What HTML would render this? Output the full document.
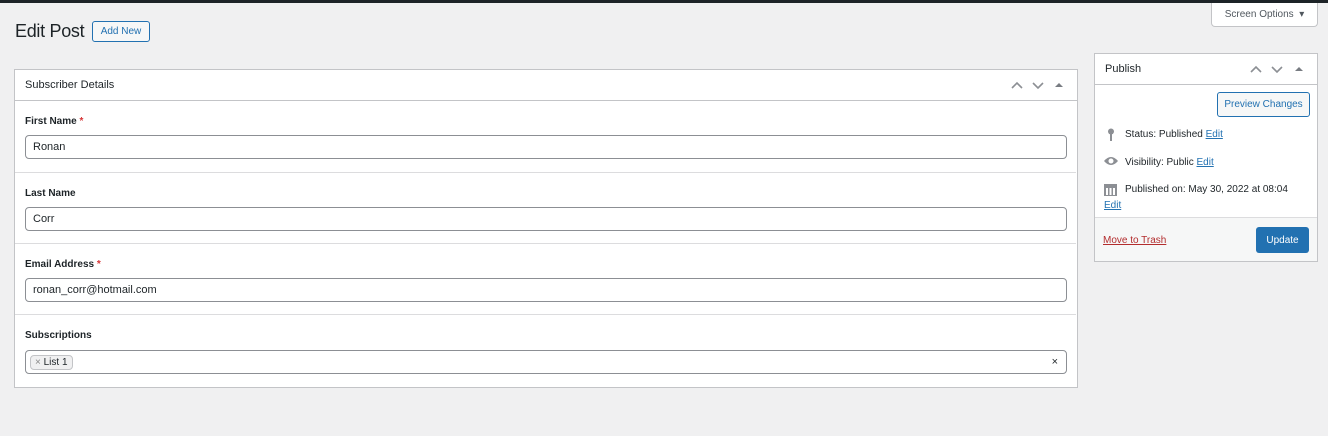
<!DOCTYPE html>
<html><head><style>
*{box-sizing:border-box;margin:0;padding:0}
body{width:1328px;height:436px;background:#f0f0f1;font-family:"Liberation Sans",sans-serif;color:#1d2327;position:relative;overflow:hidden;font-size:11px}
.abs{position:absolute}
.top{left:0;top:0;width:1328px;height:3px;background:#1d2327}
h1{position:absolute;left:15px;top:21px;font-size:18px;font-weight:400;letter-spacing:-0.3px}
.btn{display:flex;align-items:center;justify-content:center}
.addnew{left:92px;top:21px;width:58px;height:21px;border:1px solid #2271b1;border-radius:3px;color:#2271b1;font-size:10px;background:#f6f7f7}
.so{left:1211px;top:3px;width:107px;height:24px;border:1px solid #c3c4c7;border-top:none;border-radius:0 0 4px 4px;background:#fff;color:#50575e;font-size:10px}
.box{background:#fff;border:1px solid #c3c4c7}
.hdr{height:31px;border-bottom:1px solid #c3c4c7;font-size:11px;line-height:31px;padding-left:10px}
.sec{position:absolute;left:0;width:1061px;border-bottom:1px solid #dcdcde}
.lbl{position:absolute;left:10px;font-weight:bold;font-size:10px}
.inp{position:absolute;left:10px;width:1042px;height:24px;border:1px solid #8c8f94;border-radius:4px;padding-left:7px;line-height:23px;font-size:11px}
a{color:#2271b1;text-decoration:underline}
.row{position:absolute;left:10px;font-size:10px}
</style></head><body>
<div class="abs top"></div>
<h1>Edit Post</h1>
<div class="abs addnew btn">Add New</div>
<div class="abs so btn">Screen Options &nbsp;▾</div>

<div class="abs box" style="left:14px;top:69px;width:1064px;height:319px">
 <div class="hdr">Subscriber Details</div>
 <svg class="abs" style="left:996px;top:10px" width="60" height="12"><path d="M1 8l5-5 5 5M22 3l5 5 5-5" stroke="#8c8f94" stroke-width="1.6" fill="none"/><path d="M44 7l4-4 4 4z" fill="#787c82"/></svg>
 <div class="sec" style="top:31px;height:72px"><div class="lbl" style="top:15px">First Name <span style="color:#d63638">*</span></div><div class="inp" style="top:34px">Ronan</div></div>
 <div class="sec" style="top:103px;height:71px"><div class="lbl" style="top:15px">Last Name</div><div class="inp" style="top:34px">Corr</div></div>
 <div class="sec" style="top:174px;height:71px"><div class="lbl" style="top:15px">Email Address <span style="color:#d63638">*</span></div><div class="inp" style="top:34px">ronan_corr@hotmail.com</div></div>
 <div class="sec" style="top:245px;height:73px;border:none"><div class="lbl" style="top:15px">Subscriptions</div>
  <div class="inp" style="top:35px;padding-left:4px"><span style="display:inline-block;margin-top:4px;height:15px;line-height:13px;border:1px solid #c3c4c7;border-radius:4px;background:#f0f0f1;font-size:10px;padding:0 4px;vertical-align:top"><span style="color:#888">×</span> List 1</span><span style="position:absolute;right:8px;top:0;font-size:11px">×</span></div></div>
</div>

<div class="abs box" style="left:1094px;top:53px;width:224px;height:209px">
 <div class="hdr">Publish</div>
 <svg class="abs" style="left:155px;top:10px" width="60" height="12"><path d="M1 8l5-5 5 5M22 3l5 5 5-5" stroke="#8c8f94" stroke-width="1.6" fill="none"/><path d="M45 7l4-4 4 4z" fill="#787c82"/></svg>
 <div class="abs btn" style="left:122px;top:38px;width:93px;height:25px;border:1px solid #2271b1;border-radius:3px;color:#2271b1;font-size:10px;background:#f6f7f7">Preview Changes</div>
 <svg class="abs" style="left:12px;top:74px" width="8" height="14"><circle cx="4" cy="3.5" r="3" fill="#8c8f94"/><rect x="3" y="5" width="2" height="8" fill="#8c8f94"/></svg>
 <div class="row" style="left:30px;top:75px">Status: Published <a>Edit</a></div>
 <svg class="abs" style="left:8px;top:102px" width="16" height="10"><path d="M1 5Q8-3 15 5Q8 13 1 5z" fill="#8c8f94"/><circle cx="8" cy="5" r="2.5" fill="#fff"/></svg>
 <div class="row" style="left:30px;top:103px">Visibility: Public <a>Edit</a></div>
 <svg class="abs" style="left:9px;top:128px" width="13" height="14"><rect x="0" y="2" width="13" height="12" fill="#8c8f94"/><rect x="2" y="6" width="2" height="7" fill="#fff"/><rect x="5.5" y="6" width="2" height="7" fill="#fff"/><rect x="9" y="6" width="2" height="7" fill="#fff"/></svg>
 <div class="row" style="left:30px;top:130px">Published on: May 30, 2022 at 08:04</div>
 <div class="row" style="left:9px;top:146px"><a>Edit</a></div>
 <div class="abs" style="left:0;top:163px;width:222px;height:44px;background:#f6f7f7;border-top:1px solid #dcdcde">
  <a class="abs" style="left:8px;top:17px;color:#b32d2e;font-size:10px">Move to Trash</a>
  <div class="abs btn" style="left:161px;top:9px;width:53px;height:26px;background:#2271b1;border-radius:3px;color:#fff;font-size:10px">Update</div>
 </div>
</div>
</body></html>
